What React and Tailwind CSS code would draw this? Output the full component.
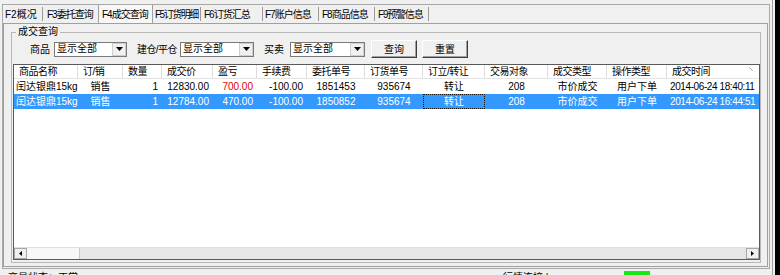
import React from 'react';

const tabs = [
  { name: 'F2概况', w: 'w-[39px] pl-[2px] tracking-normal', sep: true },
  { name: 'F3委托查询', w: 'w-[55px] pl-[4px] tracking-[-1px]', sep: false },
  { name: 'F4成交查询', w: 'w-[55px] pl-[3px] tracking-[-1px]', active: true },
  { name: 'F5订货明细', w: 'w-[47px] pl-[2px] tracking-[-1.5px]', sep: true },
  { name: 'F6订货汇总', w: 'w-[61px] pl-[3px] tracking-[-1px]', sep: true },
  { name: 'F7账户信息', w: 'w-[55px] pl-[2px] tracking-[-1px]', sep: true },
  { name: 'F8商品信息', w: 'w-[55px] pl-[3px] tracking-[-1px]', sep: true },
  { name: 'F9预警信息', w: 'w-[53px] pl-[3px] tracking-[-1.2px]', sep: true },
];

// column widths match the header separators in the listview
const columns = [
  { name: '商品名称', w: 'w-[64px]', cell: 'justify-start pl-[2px]' },
  { name: '订/销', w: 'w-[45px]', cell: 'justify-center' },
  { name: '数量', w: 'w-[39px]', cell: 'justify-end pr-[4px]' },
  { name: '成交价', w: 'w-[51px]', cell: 'justify-end pr-[4px]' },
  { name: '盈亏', w: 'w-[44px]', cell: 'justify-end pr-[4px]' },
  { name: '手续费', w: 'w-[50px]', cell: 'justify-end pr-[4px]' },
  { name: '委托单号', w: 'w-[58px]', cell: 'justify-center' },
  { name: '订货单号', w: 'w-[58px]', cell: 'justify-center' },
  { name: '订立/转让', w: 'w-[62px]', cell: 'justify-center' },
  { name: '交易对象', w: 'w-[63px]', cell: 'justify-center' },
  { name: '成交类型', w: 'w-[59px]', cell: 'justify-center' },
  { name: '操作类型', w: 'w-[60px]', cell: 'justify-center' },
  { name: '成交时间', w: 'w-[100px]', cell: 'justify-start pl-[3px] tracking-[-0.4px]' },
];

const trades = [
  ['闰达银鼎15kg', '销售', '1', '12830.00', '700.00', '-100.00', '1851453', '935674', '转让', '208', '市价成交', '用户下单', '2014-06-24 18:40:11'],
  ['闰达银鼎15kg', '销售', '1', '12784.00', '470.00', '-100.00', '1850852', '935674', '转让', '208', '市价成交', '用户下单', '2014-06-24 16:44:51'],
];

function Caret() {
  return (
    <svg width="7" height="4" viewBox="0 0 7 4">
      <path d="M0 0h7L3.5 4z" fill="#000" />
    </svg>
  );
}

function Combo({ w }) {
  return (
    <div className={`${w} h-[15px] shrink-0 flex bg-white border border-[#7a7a7a]`}>
      <div className="flex-1 flex items-center pl-[2px] leading-none whitespace-nowrap">显示全部</div>
      <div className="w-[14px] flex items-center justify-center bg-[#f0f0f0] border border-[#cfcfcf]">
        <Caret />
      </div>
    </div>
  );
}

function Btn({ children }) {
  return (
    <div className="w-[46px] h-[18px] flex items-center justify-center bg-[#f0f0f0] border border-t-white border-l-white border-r-[#3c3c3c] border-b-[#3c3c3c] shadow-[inset_-1px_-1px_0_#a0a0a0]">
      {children}
    </div>
  );
}

function ScrollArrow({ dir }) {
  return (
    <div className="w-[13px] h-full flex items-center justify-center bg-[#f0f0f0] border border-[#a8a8a8]">
      <svg width="3" height="5" viewBox="0 0 3 5">
        {dir === 'left' ? <path d="M3 0v5L0 2.5z" fill="#000" /> : <path d="M0 0v5l3-2.5z" fill="#000" />}
      </svg>
    </div>
  );
}

export default function App() {
  return (
    <div className="font-['Liberation_Sans','Noto_Sans_CJK_SC',sans-serif] text-[10px] text-black w-[780px] h-[275px] overflow-hidden bg-[#f0f0f0] flex">
      <div className="w-[770px] shrink-0 flex flex-col">
        <div className="h-[4px] shrink-0" />

        {/* outer frame */}
        <div className="ml-[2px] w-[768px] h-[265px] shrink-0 border border-[#a8a8a8] flex flex-col">
          {/* tab strip */}
          <div className="h-[18px] shrink-0 flex items-center">
            {tabs.map(t => (
              <React.Fragment key={t.name}>
                <div
                  className={
                    t.active
                      ? `${t.w} h-full shrink-0 flex items-center whitespace-nowrap bg-[#f7f7f7] border-x border-[#a0a0a0]`
                      : `${t.w} h-full shrink-0 flex items-center whitespace-nowrap`
                  }
                >
                  {t.name}
                </div>
                {t.sep && <div className="w-[1px] h-[14px] shrink-0 bg-[#9a9a9a]" />}
              </React.Fragment>
            ))}
          </div>

          {/* tab panel */}
          <div className="w-[765px] h-[244px] shrink-0 border border-[#a0a0a0]">
            <fieldset className="ml-[7px] mt-[2px] w-[750px] h-[237px] border border-[#b8b8b8]">
              <legend className="ml-[4px] px-[2px] leading-[12px]">成交查询</legend>

              {/* filters */}
              <div className="mt-[2px] h-[18px] flex items-center pl-[18px] whitespace-nowrap">
                <div className="w-[24px] shrink-0">商品</div>
                <Combo w="w-[73px]" />
                <div className="ml-[10px] w-[43px] shrink-0 tracking-[-0.6px]">建仓/平仓</div>
                <Combo w="w-[74px]" />
                <div className="ml-[10px] w-[26px] shrink-0">买卖</div>
                <Combo w="w-[75px]" />
                <div className="ml-[6px]">
                  <Btn>查询</Btn>
                </div>
                <div className="ml-[5px]">
                  <Btn>重置</Btn>
                </div>
              </div>

              {/* listview */}
              <div className="ml-[1px] mt-[6px] w-[747px] h-[196px] border border-[#5a5a5a] bg-white flex flex-col overflow-hidden">
                <div className="h-[14px] shrink-0 flex border-b border-[#e3e3e3]">
                  {columns.map((c, i) => (
                    <div
                      key={c.name}
                      className={`${c.w} shrink-0 h-full flex items-center pl-[5px] whitespace-nowrap tracking-[-0.5px] border-r border-[#dcdcdc] relative`}
                    >
                      {c.name}
                      {i === columns.length - 1 && (
                        <svg className="absolute left-[82px] top-[2px]" width="4" height="4" viewBox="0 0 4 4">
                          <path d="M0.5 0.5L3.5 3.5" stroke="#9a9a9a" strokeWidth="1" />
                        </svg>
                      )}
                    </div>
                  ))}
                </div>

                {trades.map((row, r) => {
                  const selected = r === 1;
                  return (
                    <div
                      key={r}
                      className={selected ? 'h-[15px] shrink-0 flex bg-[#3399ff] text-white' : 'h-[15px] shrink-0 flex'}
                    >
                      {row.map((v, i) => (
                        <div
                          key={i}
                          className={
                            selected && i === 8
                              ? `${columns[i].w} ${columns[i].cell} shrink-0 h-full flex items-center whitespace-nowrap border border-dotted border-[#111]`
                              : `${columns[i].w} ${columns[i].cell} shrink-0 h-full flex items-center whitespace-nowrap`
                          }
                        >
                          <span className={!selected && i === 4 ? 'text-[#e00000]' : ''}>{v}</span>
                        </div>
                      ))}
                    </div>
                  );
                })}

                <div className="flex-1" />

                {/* horizontal scrollbar */}
                <div className="h-[12px] shrink-0 flex border-t border-[#e0e0e0] bg-[#e6e6e6]">
                  <ScrollArrow dir="left" />
                  <div className="w-[53px] h-full bg-[#f7f7f7] border-r border-[#c8c8c8]" />
                  <div className="flex-1" />
                  <ScrollArrow dir="right" />
                </div>
              </div>
            </fieldset>
          </div>
        </div>

        {/* status bar, mostly below the fold */}
        <div className="flex items-start">
          <div className="w-[503px] shrink-0 pl-[8px] pt-[3px] leading-[12px]">交易状态：正常</div>
          <div className="w-[121px] shrink-0 pt-[3px] leading-[12px]">行情连接 |</div>
          <div className="w-[26px] h-[6px] mt-[2px] bg-[#16e916]" />
        </div>
      </div>

      <div className="w-[2px] shrink-0" />
      <div className="w-[1px] shrink-0 bg-[#a0a0a0]" />
      <div className="w-[2px] shrink-0" />
      <div className="flex-1 bg-black" />
    </div>
  );
}
